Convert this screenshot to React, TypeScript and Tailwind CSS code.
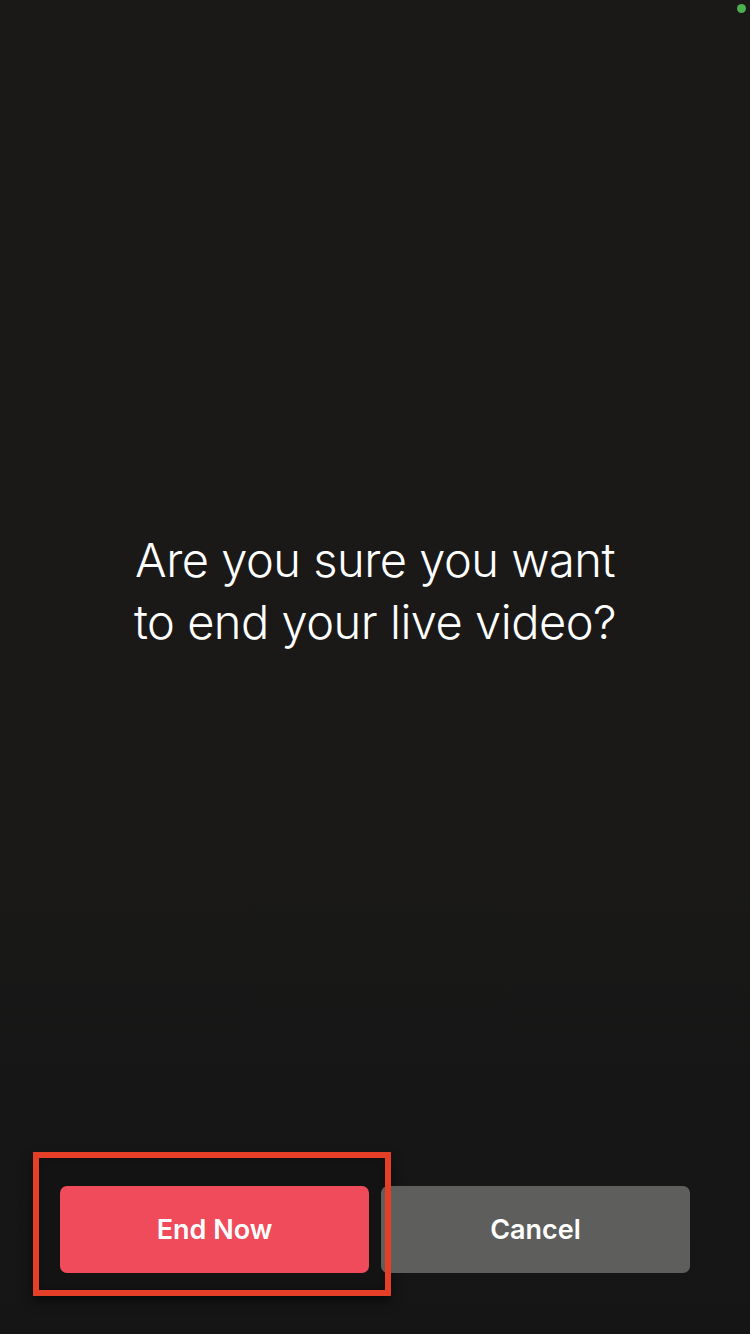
import React from "react";

export default function App() {
  return (
    <div
      className="relative w-[750px] h-[1334px] overflow-hidden flex flex-col bg-[linear-gradient(to_bottom,#1a1918_0%,#1a1918_62%,#161616_85%,#151515_100%)]"
      style={{ fontFamily: "Inter, 'Noto Sans', sans-serif" }}
    >
      {/* status dot */}
      <div className="absolute right-[4px] top-[4px] w-[9px] h-[9px] rounded-full bg-[#4caf50]" />

      <div className="flex-1 flex items-center justify-center pb-[4px]">
        <p className="text-white text-center font-light text-[47px] leading-[62px] tracking-[-0.5px]">
          Are you sure you want
          <br />
          to end your live video?
        </p>
      </div>

      {/* annotation fill (behind buttons) */}
      <div className="absolute left-[33px] top-[1152px] w-[357px] h-[143px] bg-[#131313] shadow-[inset_0_0_6px_4px_rgba(0,0,0,0.45),0_6px_10px_rgba(0,0,0,0.55)]" />

      <div className="relative flex gap-[12px] px-[60px] pb-[61px]">
        <button className="flex-1 h-[87px] rounded-[7px] bg-[#ef4b5b] text-white text-[27px] font-semibold pt-[2px]">
          End Now
        </button>
        <button className="flex-1 h-[87px] rounded-[7px] bg-[#5e5e5c] text-white text-[27px] font-semibold pt-[2px]">
          Cancel
        </button>
      </div>

      {/* annotation border (on top) */}
      <div className="absolute left-[33px] top-[1152px] w-[358px] h-[144px] border-[6px] border-[#e63f27] pointer-events-none" />
    </div>
  );
}
